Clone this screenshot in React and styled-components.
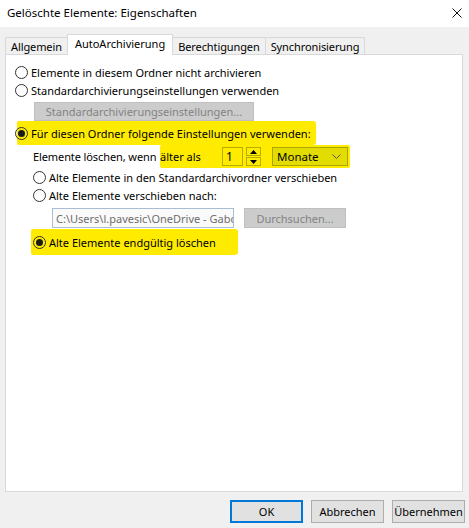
import React from 'react';
import styled, { createGlobalStyle } from 'styled-components';

const GlobalStyle = createGlobalStyle`
	html, body {
		margin: 0;
		padding: 0;
		background: #f0f0f0;
	}
	body {
		font-family: 'Noto Sans', 'Open Sans', sans-serif;
		font-size: 11px;
		color: #000;
	}
`;

const YELLOW = '#ffeb00';

const Window = styled.div`
	width: 469px;
	height: 528px;
	display: flex;
	flex-direction: column;
	background: #f0f0f0;
	overflow: hidden;
`;

const TitleBar = styled.div`
	height: 27px;
	flex: none;
	background: #fff;
	display: flex;
	align-items: center;
	justify-content: space-between;
	padding: 0 7px 2px 7px;
	box-sizing: border-box;
	font-size: 11.5px;
`;

const CloseButton = styled.svg`
	width: 10px;
	height: 10px;
`;

const TabStrip = styled.div`
	display: flex;
	align-items: flex-end;
	height: 20px;
	margin-top: 7px;
	padding-left: 5px;
	flex: none;
`;

const Tab = styled.div`
	height: ${(p) => (p.$active ? '21px' : '17px')};
	margin-bottom: ${(p) => (p.$active ? '-1px' : '0')};
	margin-left: ${(p) => (p.$first ? '0' : '-1px')};
	padding: ${(p) => (p.$active ? '1px 7px 0' : '0 5px')};
	box-sizing: border-box;
	border: 1px solid #d9d9d9;
	border-bottom: none;
	background: ${(p) => (p.$active ? '#fff' : '#f0f0f0')};
	position: relative;
	z-index: ${(p) => (p.$active ? 2 : 1)};
	display: flex;
	align-items: ${(p) => (p.$active ? 'flex-start' : 'center')};
	line-height: 15px;
	white-space: nowrap;
	letter-spacing: ${(p) => (p.$active ? '0' : '-0.1px')};
`;

const Panel = styled.div`
	width: 458px;
	height: 438px;
	margin-left: 5px;
	box-sizing: border-box;
	border: 1px solid #d9d9d9;
	background: #fff;
	flex: none;
	padding: 8px 0 0 9px;
	display: flex;
	flex-direction: column;
	align-items: flex-start;
`;

const Option = styled.div`
	display: flex;
	align-items: center;
	gap: 3px;
	height: ${(p) => p.$h || 18}px;
	margin-left: ${(p) => p.$indent || 0}px;
	white-space: nowrap;
`;

const Radio = styled.span`
	width: 13px;
	height: 13px;
	box-sizing: border-box;
	border: 1px solid #333;
	border-radius: 50%;
	display: flex;
	align-items: center;
	justify-content: center;
	flex: none;

	&::after {
		content: '';
		width: 7px;
		height: 7px;
		border-radius: 50%;
		background: ${(p) => (p.$checked ? '#1a1a1a' : 'transparent')};
	}
`;

const Highlight = styled.div`
	background: ${YELLOW};
	border-radius: 2px 3px 3px 2px;
	margin-left: ${(p) => p.$left || 0}px;
	width: ${(p) => p.$w}px;
	height: ${(p) => p.$h}px;
	margin-top: ${(p) => p.$top || 0}px;
	display: flex;
	align-items: center;
	box-sizing: border-box;
	padding-left: ${(p) => p.$pad || 0}px;
`;

const DisabledButton = styled.div`
	width: ${(p) => p.$w}px;
	height: ${(p) => p.$h || 19}px;
	margin-left: ${(p) => p.$indent || 0}px;
	margin-top: ${(p) => p.$top || 0}px;
	box-sizing: border-box;
	border: 1px solid #bfbfbf;
	background: #cccccc;
	color: #838383;
	display: flex;
	align-items: center;
	justify-content: center;
	white-space: nowrap;
	flex: none;
`;

const AgeRow = styled.div`
	display: flex;
	align-items: center;
	height: 23px;
	margin-left: 18px;
	white-space: nowrap;
`;

const AgeLabel = styled.span`
	width: 127px;
	letter-spacing: -0.1px;
`;

const AgeGroup = styled.div`
	background: ${YELLOW};
	height: 23px;
	width: 190px;
	display: flex;
	align-items: center;
	border-radius: 2px;
`;

const AgeText = styled.span`
	width: 62px;
`;

const NumberBox = styled.div`
	width: 21px;
	height: 19px;
	box-sizing: border-box;
	border: 1px solid #b5ae00;
	padding-left: 3px;
	display: flex;
	align-items: center;
	font-size: 12px;
`;

const Spin = styled.div`
	display: flex;
	flex-direction: column;
	gap: 1px;
	margin-left: 3px;
`;

const SpinButton = styled.div`
	width: 15px;
	height: 9px;
	box-sizing: border-box;
	border: 1px solid #b5ae00;
	display: flex;
	align-items: center;
	justify-content: center;
`;

const Select = styled.div`
	width: 76px;
	height: 19px;
	margin-left: 11px;
	box-sizing: border-box;
	border: 1px solid #aaa500;
	background: #e3dc00;
	display: flex;
	align-items: center;
	justify-content: space-between;
	padding: 0 6px 0 4px;
	font-size: 11.5px;
`;

const PathRow = styled.div`
	display: flex;
	gap: 10px;
	margin-left: 37px;
	margin-top: 3px;
	height: 20px;
`;

const PathInput = styled.div`
	width: 182px;
	height: 20px;
	box-sizing: border-box;
	border: 1px solid #a9bed4;
	background: #fafafa;
	color: #6d6d6d;
	padding-left: 3px;
	display: flex;
	align-items: center;
	overflow: hidden;
	white-space: nowrap;
`;

const ButtonRow = styled.div`
	display: flex;
	justify-content: flex-end;
	gap: 8px;
	margin-top: 8px;
	padding-right: 4px;
	flex: none;
`;

const Button = styled.div`
	width: 73px;
	height: 23px;
	box-sizing: border-box;
	border: ${(p) => (p.$default ? '2px solid #0078d7' : '1px solid #adadad')};
	background: #e1e1e1;
	display: flex;
	align-items: center;
	justify-content: center;
`;

function Arrow({ up }) {
	return (
		<svg width='7' height='4' viewBox='0 0 7 4'>
			<path d={up ? 'M0 4 L3.5 0 L7 4 Z' : 'M0 0 L3.5 4 L7 0 Z'} fill='#000' />
		</svg>
	);
}

export default function App() {
	return (
		<Window>
			<GlobalStyle />
			<TitleBar>
				<span>Gelöschte Elemente: Eigenschaften</span>
				<CloseButton viewBox='0 0 10 10'>
					<path d='M0.5 0.5 L9.5 9.5 M9.5 0.5 L0.5 9.5' stroke='#111' strokeWidth='1' />
				</CloseButton>
			</TitleBar>

			<TabStrip>
				<Tab $first>Allgemein</Tab>
				<Tab $active>AutoArchivierung</Tab>
				<Tab>Berechtigungen</Tab>
				<Tab>Synchronisierung</Tab>
			</TabStrip>

			<Panel>
				<Option>
					<Radio />
					Elemente in diesem Ordner nicht archivieren
				</Option>
				<Option>
					<Radio />
					Standardarchivierungseinstellungen verwenden
				</Option>
				<DisabledButton $w={220} $indent={19} $top={3}>
					Standardarchivierungseinstellungen...
				</DisabledButton>

				<Highlight $left={2} $w={299} $h={24}>
					<Option $indent={-2}>
						<Radio $checked />
						Für diesen Ordner folgende Einstellungen verwenden:
					</Option>
				</Highlight>

				<AgeRow>
					<AgeLabel>Elemente löschen, wenn</AgeLabel>
					<AgeGroup>
						<AgeText>älter als</AgeText>
						<NumberBox>1</NumberBox>
						<Spin>
							<SpinButton>
								<Arrow up />
							</SpinButton>
							<SpinButton>
								<Arrow />
							</SpinButton>
						</Spin>
						<Select>
							Monate
							<svg width='9' height='5' viewBox='0 0 9 5'>
								<path d='M0.5 0.5 L4.5 4.5 L8.5 0.5' stroke='#555' fill='none' strokeWidth='1' />
							</svg>
						</Select>
					</AgeGroup>
				</AgeRow>

				<Option $indent={18}>
					<Radio />
					Alte Elemente in den Standardarchivordner verschieben
				</Option>
				<Option $indent={18} $h={19}>
					<Radio />
					Alte Elemente verschieben nach:
				</Option>
				<PathRow>
					<PathInput>C:\Users\l.pavesic\OneDrive - Gabcon</PathInput>
					<DisabledButton $w={102} $h={20}>
						Durchsuchen...
					</DisabledButton>
				</PathRow>

				<Highlight $left={16} $w={207} $h={26} $top={1} $pad={2}>
					<Option>
						<Radio $checked />
						Alte Elemente endgültig löschen
					</Option>
				</Highlight>
			</Panel>

			<ButtonRow>
				<Button $default>OK</Button>
				<Button>Abbrechen</Button>
				<Button>Übernehmen</Button>
			</ButtonRow>
		</Window>
	);
}
